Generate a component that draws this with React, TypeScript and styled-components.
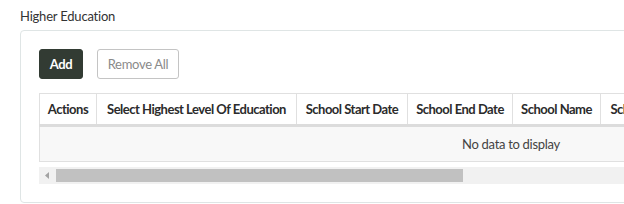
import React from 'react'
import styled, { createGlobalStyle } from 'styled-components'

const GlobalStyle = createGlobalStyle`
  html, body {
    margin: 0;
    padding: 0;
    overflow: hidden;
    background: #fff;
  }
  body {
    font-family: Lato, "Noto Sans", sans-serif;
    color: #333;
  }
`

const Page = styled.div`
  width: 1010px;
  padding: 8px 0 0 20px;
`

const SectionTitle = styled.div`
  font-size: 13px;
  line-height: 16px;
  letter-spacing: -0.2px;
  color: #333;
  margin-bottom: 6px;
`

const Card = styled.section`
  width: 944px;
  border: 1px solid #dfe5e5;
  border-radius: 4px;
  padding: 18px;
`

const Toolbar = styled.div`
  display: flex;
  gap: 14px;
  margin-bottom: 14px;
`

const Button = styled.button<{ $primary?: boolean; $w: number }>`
  width: ${(p) => p.$w}px;
  height: 30px;
  box-sizing: border-box;
  padding: 0;
  border-radius: 3px;
  font-family: inherit;
  font-size: 13px;
  letter-spacing: -0.3px;
  cursor: pointer;
  border: 1px solid ${(p) => (p.$primary ? '#323b33' : '#c4c4c4')};
  background: ${(p) => (p.$primary ? '#323b33' : '#fff')};
  color: ${(p) => (p.$primary ? '#fff' : '#8a8a8a')};
  font-weight: ${(p) => (p.$primary ? 700 : 400)};
`

const Table = styled.table`
  border-collapse: collapse;
  width: 944px;
  table-layout: fixed;
  font-size: 13px;
`

const HeadCell = styled.th<{ $w?: number }>`
  width: ${(p) => (p.$w ? `${p.$w}px` : 'auto')};
  height: 32px;
  padding: 0 6px;
  text-align: center;
  font-weight: 700;
  letter-spacing: -0.5px;
  color: #2b2b2b;
  white-space: nowrap;
  overflow: hidden;
  border: 1px solid #e0e0e0;
  border-bottom: 3px solid #dcdcdc;
  box-sizing: border-box;
`

const EmptyCell = styled.td`
  height: 32px;
  background: #f8f8f8;
  text-align: center;
  letter-spacing: -0.3px;
  color: #444;
  border: 1px solid #e0e0e0;
  border-top: none;
`

const ScrollTrack = styled.div`
  margin-top: 5px;
  height: 17px;
  background: #f1f1f1;
  display: flex;
  align-items: center;
`

const ScrollArrow = styled.div`
  width: 17px;
  display: flex;
  justify-content: center;
  align-items: center;
  color: #a3a3a3;
`

const ScrollThumb = styled.div`
  height: 13px;
  width: 407px;
  background: #c1c1c1;
`

const columns: { label: string; w?: number }[] = [
  { label: 'Actions', w: 57 },
  { label: 'Select Highest Level Of Education', w: 200 },
  { label: 'School Start Date', w: 111 },
  { label: 'School End Date', w: 105 },
  { label: 'School Name', w: 88 },
  { label: 'School Type', w: 84 },
  { label: 'Degree', w: 90 },
  { label: 'Major' },
]

export default function App() {
  return (
    <>
      <GlobalStyle />
      <Page>
        <SectionTitle>Higher Education</SectionTitle>
        <Card>
          <Toolbar>
            <Button $primary $w={44}>
              Add
            </Button>
            <Button $w={82}>Remove All</Button>
          </Toolbar>
          <Table>
            <thead>
              <tr>
                {columns.map((c) => (
                  <HeadCell key={c.label} $w={c.w}>
                    {c.label}
                  </HeadCell>
                ))}
              </tr>
            </thead>
            <tbody>
              <tr>
                <EmptyCell colSpan={columns.length}>No data to display</EmptyCell>
              </tr>
            </tbody>
          </Table>
          <ScrollTrack>
            <ScrollArrow>
              <svg width="5" height="7" viewBox="0 0 5 7">
                <path d="M4 0 L0 3.5 L4 7 Z" fill="currentColor" />
              </svg>
            </ScrollArrow>
            <ScrollThumb />
          </ScrollTrack>
        </Card>
      </Page>
    </>
  )
}
